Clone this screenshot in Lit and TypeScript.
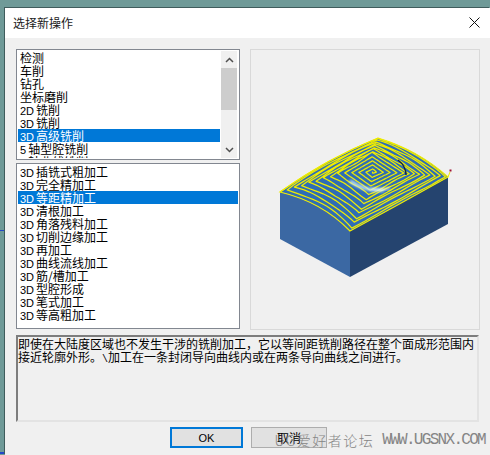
import { LitElement, html, css, svg } from "lit";
import { customElement } from "lit/decorators.js";

type Pt = [number, number];
type Item = { pre?: string; text: string };

const LIST_A: Item[] = [
  { text: "检测" }, { text: "车削" }, { text: "钻孔" }, { text: "坐标磨削" },
  { pre: "2D", text: "铣削" }, { pre: "3D", text: "铣削" },
  { pre: "3D", text: "高级铣削" }, { pre: "5", text: "轴型腔铣削" }, { pre: "5", text: "轴曲线铣削" },
];
const LIST_B: Item[] = [
  "插铣式粗加工", "完全精加工", "等距精加工", "清根加工", "角落残料加工", "切削边缘加工",
  "再加工", "曲线流线加工", "筋/槽加工", "型腔形成", "笔式加工", "等高粗加工",
].map((text) => ({ pre: "3D", text }));

const bez = (a: Pt, c: Pt, b: Pt, t: number): Pt => {
  const u = 1 - t;
  return [u * u * a[0] + 2 * u * t * c[0] + t * t * b[0], u * u * a[1] + 2 * u * t * c[1] + t * t * b[1]];
};
const lerp = (a: Pt, b: Pt, t: number): Pt => [a[0] + (b[0] - a[0]) * t, a[1] + (b[1] - a[1]) * t];

const L: Pt = [280, 192], B: Pt = [378, 138], R: Pt = [448, 177], F: Pt = [350, 231];
const EDGES: [Pt, Pt, Pt][] = [
  [L, [328, 158], B], [B, [418, 150], R], [R, [398, 205], F], [F, [322, 202], L],
];
const CENTER: Pt = [373, 172];
const DIAMOND: Pt[] = [[340, 173], [372, 153], [405, 173], [370, 192]];
const SAMPLES = 14;
const outline = (t: number): Pt => {
  const v = ((t % 4) + 4) % 4;
  const i = Math.floor(v);
  const e = EDGES[i];
  return bez(e[0], e[1], e[2], v - i);
};
const diamond = (t: number): Pt => {
  const v = ((t % 4) + 4) % 4;
  const i = Math.floor(v);
  return lerp(DIAMOND[i], DIAMOND[(i + 1) % 4], v - i);
};
const spiral = (): string => {
  const loops = 13;
  const pts: string[] = [];
  const total = loops * 4 * SAMPLES;
  const knee = 0.36;
  for (let n = 0; n <= total; n++) {
    const t = n / SAMPLES;
    const s = 1 - n / total;
    const d = diamond(t);
    const p = s > knee ? lerp(d, outline(t), (s - knee) / (1 - knee)) : lerp(CENTER, d, s / knee);
    const wob = s > knee && s < 0.96 ? Math.sin(t * 7) * 0.7 : 0;
    pts.push(`${p[0].toFixed(1)},${(p[1] + wob).toFixed(1)}`);
  }
  return pts.join(" ");
};
const topPath =
  `M${L} Q${EDGES[0][1]} ${B} Q${EDGES[1][1]} ${R} Q${EDGES[2][1]} ${F} Q${EDGES[3][1]} ${L}Z`;

@customElement("app-root")
export class AppRoot extends LitElement {
  static styles = css`
    :host { display: block; width: 490px; height: 455px; overflow: hidden; }
    .desk {
      box-sizing: border-box; width: 490px; height: 455px; padding: 8px 0 0 5px; position: relative;
      background:
        linear-gradient(#2347c8, #2347c8) 0 230px / 5px 1px no-repeat,
        linear-gradient(#2347c8, #2347c8) 0 452px / 5px 2px no-repeat,
        #6f9a98;
    }
    .window {
      height: 447px; display: flex; flex-direction: column; background: #f0f0f0;
      box-shadow: -1px -1px 0 #3f5c5c;
      font: 12px/13px "Noto Sans CJK SC", sans-serif; color: #000;
    }
    .title {
      box-sizing: border-box; height: 30px; flex: none; background: #fff; display: flex; align-items: center;
      justify-content: space-between; padding: 0 10px 1px 8px; color: #1a1a1a; font-size: 12px;
    }
    .close { display: block; }
    .body { flex: 1; padding: 11px 10px 0 11px; display: flex; flex-direction: column; }
    .top { display: flex; gap: 10px; }
    .lists { width: 224px; display: flex; flex-direction: column; gap: 3px; }
    .list {
      box-sizing: border-box; border: 1px solid #828790; background: #fff; padding: 1px;
      display: flex; overflow: hidden;
    }
    .a { height: 111px; }
    .b { height: 166px; }
    .items { flex: 1; min-width: 0; overflow: hidden; }
    .item { height: 13px; padding-left: 2px; white-space: nowrap; line-height: 13px; }
    .sel { background: #0078d7; color: #fff; }
    .lat { font-family: "Liberation Sans", sans-serif; font-size: 11px; margin-right: 2px; }
    .bar { width: 16px; margin: 0 1px; background: #f0f0f0; display: flex; flex-direction: column; flex: none; }
    .arrow { height: 17px; display: flex; align-items: center; justify-content: center; flex: none; }
    .track { flex: 1; }
    .thumb { height: 42px; background: #cdcdcd; }
    .panel { box-sizing: border-box; width: 230px; height: 281px; border: 1px solid #d9d9d9; }
    .panel svg { display: block; }
    .desc {
      box-sizing: border-box; margin-top: 5px; height: 87px; width: 463px;
      border: 2px solid; border-color: #7d7d7d #e3e3e3 #e3e3e3 #7d7d7d; white-space: pre-wrap;
    }
    .slash { font-family: "Liberation Mono", monospace; font-size: 10px; }
    .actions { margin-top: 5px; padding-left: 154px; display: flex; gap: 8px; }
    .btn {
      box-sizing: border-box; height: 21px; display: flex; align-items: center; justify-content: center;
      background: #e1e1e1;
    }
    .ok { width: 73px; border: 2px solid #0078d7; font: 11px "Liberation Sans", sans-serif; }
    .cancel { width: 76px; border: 1px solid #adadad; }
    .mark {
      position: absolute; right: 5px; bottom: 7px; display: flex; align-items: center; color: #858585;
      white-space: nowrap; line-height: 15px;
    }
    .mark-cn { font: 300 14px/15px "Noto Sans CJK SC", sans-serif; letter-spacing: 1.5px; margin-right: 8px; }
    .mark-en { font: 16px/15px "Liberation Mono", monospace; letter-spacing: -1.7px; }
  `;

  private row(it: Item, selected: boolean) {
    return html`<div class="item ${selected ? "sel" : ""}">${it.pre ? html`<span class="lat">${it.pre}</span>` : ""}${it.text}</div>`;
  }

  private model() {
    return svg`
      <defs>
        <filter id="soft" x="-30%" y="-60%" width="160%" height="220%"><feGaussianBlur stdDeviation="1.5"/></filter>
      </defs>
      <path d="M280 192 Q322 202 350 231 L350 277 L280 239Z" fill="#3b68a3"/>
      <path d="M350 231 L448 177 L448 224 L350 277Z" fill="#25446f"/>
      <path d=${topPath} fill="#2f6db5"/>
      <polyline points=${spiral()} fill="none" stroke="#efec00" stroke-width="1.25" stroke-linejoin="round"/>
      <path d=${topPath} fill="none" stroke="#efec00" stroke-width="1.2"/>
      <path d="M350 181 Q366 192 384 190" fill="none" stroke="#cfefff" stroke-width="3" filter="url(#soft)"/>
      <path d="M372 189 Q382 191 390 188" fill="none" stroke="#ffffff" stroke-width="1.6" filter="url(#soft)"/>
      <path d="M398 160 Q406 166 406 175" fill="none" stroke="#14233f" stroke-width="1.4"/>
      <path d="M448 177 L450 172" stroke="#efec00" stroke-width="1"/>
      <rect x="449.500" y="169.500" width="2" height="2" fill="#a01030"/>
    `;
  }

  render() {
    return html`
      <div class="desk">
        <div class="window">
          <div class="title">
            <span>选择新操作</span>
            <svg class="close" width="11" height="11" viewBox="0 0 11 11"><path d="M.5.5l10 10M10.500.5l-10 10" stroke="#111" stroke-width="1" fill="none"/></svg>
          </div>
          <div class="body">
            <div class="top">
              <div class="lists">
                <div class="list a">
                  <div class="items">${LIST_A.map((it, i) => this.row(it, i === 6))}</div>
                  <div class="bar">
                    <div class="arrow"><svg width="9" height="6" viewBox="0 0 9 6"><path d="M1 5l3.500-3.500L8 5" fill="none" stroke="#505050" stroke-width="1.500"/></svg></div>
                    <div class="thumb"></div>
                    <div class="track"></div>
                    <div class="arrow"><svg width="9" height="6" viewBox="0 0 9 6"><path d="M1 1l3.500 3.500L8 1" fill="none" stroke="#505050" stroke-width="1.500"/></svg></div>
                  </div>
                </div>
                <div class="list b">
                  <div class="items">${LIST_B.map((it, i) => this.row(it, i === 2))}</div>
                </div>
              </div>
              <div class="panel">
                <svg width="228" height="279" viewBox="251 50 228 279">${this.model()}</svg>
              </div>
            </div>
            <div class="desc">即使在大陆度区域也不发生干涉的铣削加工，它以等间距铣削路径在整个面成形范围内
接近轮廓外形。<span class="slash">\\</span>加工在一条封闭导向曲线内或在两条导向曲线之间进行。</div>
            <div class="actions">
              <div class="btn ok">OK</div>
              <div class="btn cancel">取消</div>
            </div>
          </div>
        </div>
        <div class="mark"><span class="mark-cn">UG爱好者论坛</span><span class="mark-en">WWW.UGSNX.COM</span></div>
      </div>
    `;
  }
}
